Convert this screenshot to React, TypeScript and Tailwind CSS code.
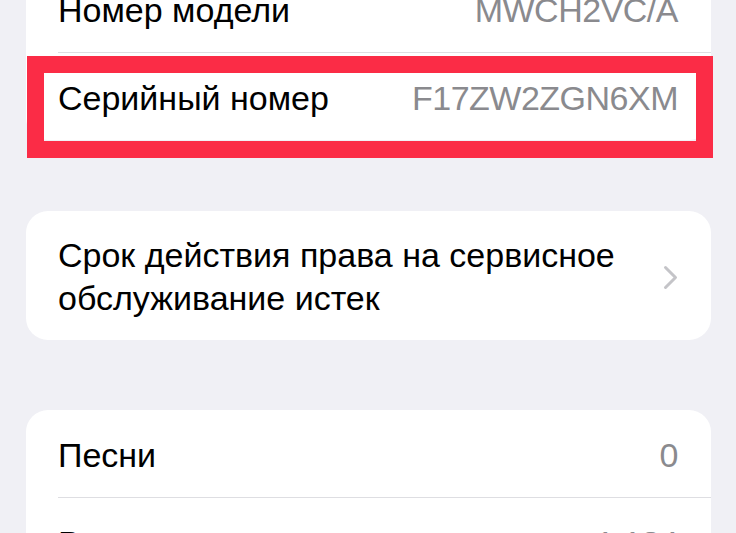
import React from "react";

const font = { fontFamily: '"Liberation Sans", Arial, sans-serif' };

function Row({ label, value }: { label: string; value?: string }) {
  return (
    <div className="flex h-[87px] items-start justify-between pl-[32px] pr-[33px] pt-[24px] text-[34px] leading-[43px]">
      <span className="text-black whitespace-nowrap">{label}</span>
      {value !== undefined && (
        <span className="text-[#8a8a8e] whitespace-nowrap tracking-[-0.5px]">{value}</span>
      )}
    </div>
  );
}

function Separator() {
  return <div className="ml-[32px] h-px bg-[#dedee2]" />;
}

function Chevron() {
  return (
    <svg width="15" height="25" viewBox="0 0 15 25" fill="none">
      <polyline
        points="2.5,2.5 12.5,12.5 2.5,22.5"
        stroke="#c4c4c8"
        strokeWidth="3"
        strokeLinecap="round"
        strokeLinejoin="round"
      />
    </svg>
  );
}

export default function App() {
  return (
    <div className="h-[533px] overflow-hidden bg-[#f0f0f5]" style={font}>
      <div className="-mt-[35px] pl-[26px] pr-[25px]">
        {/* Device info group */}
        <div className="rounded-[22px] bg-white">
          <Row label="Номер модели" value="MWCH2VC/A" />
          <Separator />
          <div className="relative">
            <Row label="Серийный номер" value="F17ZW2ZGN6XM" />
            <div className="pointer-events-none absolute left-[1px] -right-[2px] top-[3px] -bottom-[18px] border-[17px] border-[#fb2c46]" />
          </div>
        </div>

        {/* Coverage group */}
        <div className="mt-[71px] flex items-center justify-between rounded-[22px] bg-white pb-[20px] pl-[32px] pr-[33px] pt-[23px]">
          <span className="whitespace-nowrap text-[34px] leading-[43px] text-black">
            Срок действия права на сервисное
            <br />
            обслуживание истек
          </span>
          <Chevron />
        </div>

        {/* Media group */}
        <div className="mt-[70px] rounded-[22px] bg-white">
          <Row label="Песни" value="0" />
          <Separator />
          <Row label="Видео" value="1 134" />
        </div>
      </div>
    </div>
  );
}
